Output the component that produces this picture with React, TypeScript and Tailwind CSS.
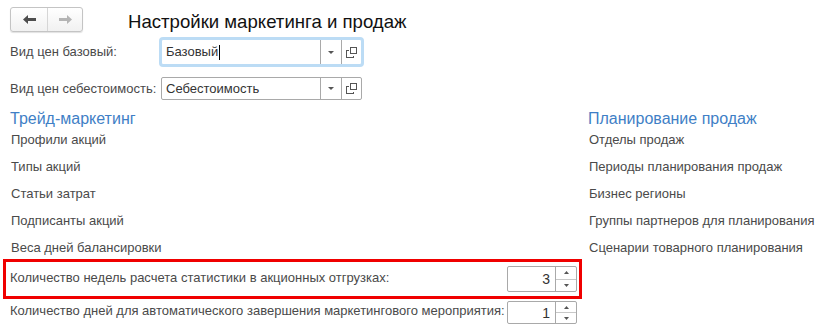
import React from "react";

const DropArrow = () => (
  <svg width="6" height="3" viewBox="0 0 6 3"><path d="M0 0H6L3 3Z" fill="#555" /></svg>
);

const OpenIcon = () => (
  <svg width="11" height="11" viewBox="0 0 11 11" fill="none" stroke="#555" strokeWidth="1" shapeRendering="crispEdges">
    <rect x="4.5" y="0.5" width="6" height="6" />
    <path d="M2.5 3.5H0.5V10.5H7.5V8.5" />
  </svg>
);

const SpinUp = () => (
  <svg width="5" height="3" viewBox="0 0 5 3"><path d="M0 3H5L2.5 0Z" fill="#555" /></svg>
);
const SpinDown = () => (
  <svg width="5" height="3" viewBox="0 0 5 3"><path d="M0 0H5L2.5 3Z" fill="#555" /></svg>
);

function Field({ value, focused }: { value: string; focused?: boolean }) {
  return (
    <div
      className={
        "flex w-[201px] items-stretch rounded-[2px] bg-white border " +
        (focused ? "h-[26px] border-[#bcdcf5] ring-2 ring-[#bcdcf5]" : "h-[23px] border-[#a9a9a9]")
      }
    >
      <div className="flex flex-1 items-center pl-[4px] text-[#333]">
        <span>{value}</span>
        {focused && <span className="ml-[1px] inline-block h-[15px] w-px bg-black" />}
      </div>
      <div className="flex w-[21px] items-center justify-center border-l border-[#a9a9a9]">
        <DropArrow />
      </div>
      <div className="flex w-[20px] items-center justify-center border-l border-[#a9a9a9]">
        <OpenIcon />
      </div>
    </div>
  );
}

function Spinner({ value, h }: { value: string; h: string }) {
  return (
    <div className={"flex w-[70px] rounded-[2px] border border-[#a9a9a9] bg-white " + h}>
      <div className="flex flex-1 items-center justify-end pr-[5px] text-[14px] text-[#333]">{value}</div>
      <div className="flex w-[21px] flex-col border-l border-[#a9a9a9]">
        <div className="flex flex-1 items-center justify-center border-b border-[#c8c8c8]">
          <SpinUp />
        </div>
        <div className="flex flex-1 items-center justify-center">
          <SpinDown />
        </div>
      </div>
    </div>
  );
}

export default function App() {
  const left = ["Профили акций", "Типы акций", "Статьи затрат", "Подписанты акций", "Веса дней балансировки"];
  const right = [
    "Отделы продаж",
    "Периоды планирования продаж",
    "Бизнес регионы",
    "Группы партнеров для планирования",
    "Сценарии товарного планирования",
  ];
  return (
    <div className="h-[334px] w-[829px] overflow-hidden bg-white pt-[7px] font-['Liberation_Sans',Arial,sans-serif] text-[13px] leading-[16px] text-[#4a4a4a]">
      {/* top bar */}
      <div className="flex h-[25px] items-start">
        <div className="ml-[10px] flex h-[25px] w-[73px] rounded-[3px] border border-[#c4c4c4] bg-gradient-to-b from-white to-[#f1f1f1] shadow-[0_1px_1px_rgba(0,0,0,0.12)]">
          <div className="flex w-[37px] items-center justify-center border-r border-[#d6d6d6]">
            <svg width="13" height="9" viewBox="0 0 13 9"><path d="M0 4.5L5 0V3H13V6H5V9Z" fill="#4d4d4d" /></svg>
          </div>
          <div className="flex flex-1 items-center justify-center">
            <svg width="13" height="9" viewBox="0 0 13 9"><path d="M13 4.5L8 0V3H0V6H8V9Z" fill="#b4b4b4" /></svg>
          </div>
        </div>
        <div className="ml-[45px] mt-[3px] text-[18.6px] leading-[23px] text-[#111]">Настройки маркетинга и продаж</div>
      </div>

      {/* field 1 */}
      <div className="mt-[7px] flex h-[26px] items-center pl-[10px]">
        <div className="w-[151px]">Вид цен базовый:</div>
        <Field value="Базовый" focused />
      </div>

      {/* field 2 */}
      <div className="mt-[12px] flex h-[23px] items-center pl-[10px]">
        <div className="w-[151px]">Вид цен себестоимость:</div>
        <Field value="Себестоимость" />
      </div>

      {/* columns */}
      <div className="mt-[10px] grid grid-cols-[587px_1fr]">
        <div className="pl-[10px]">
          <div className="text-[16px] leading-[17px] text-[#3f7fc6]">Трейд-маркетинг</div>
          <div className="mt-[5px] flex flex-col gap-[11px] pl-[1px]">
            {left.map((t) => (
              <div key={t}>{t}</div>
            ))}
          </div>
        </div>
        <div className="pl-[1px]">
          <div className="text-[16px] leading-[17px] text-[#3f7fc6]">Планирование продаж</div>
          <div className="mt-[5px] flex flex-col gap-[11px] pl-[1px]">
            {right.map((t) => (
              <div key={t}>{t}</div>
            ))}
          </div>
        </div>
      </div>

      {/* highlighted row */}
      <div className="ml-[3px] mt-[3px] flex h-[40px] w-[579px] items-center justify-between border-[3px] border-[#f00000] pl-[4px] pr-[2px]">
        <div className="pb-[2px]">Количество недель расчета статистики в акционных отгрузках:</div>
        <Spinner value="3" h="h-[26px]" />
      </div>

      {/* last row */}
      <div className="mt-[2px] flex h-[23px] w-[577px] items-center justify-between pl-[10px]">
        <div className="pb-[3px]">Количество дней для автоматического завершения маркетингового мероприятия:</div>
        <Spinner value="1" h="h-[23px]" />
      </div>
    </div>
  );
}
